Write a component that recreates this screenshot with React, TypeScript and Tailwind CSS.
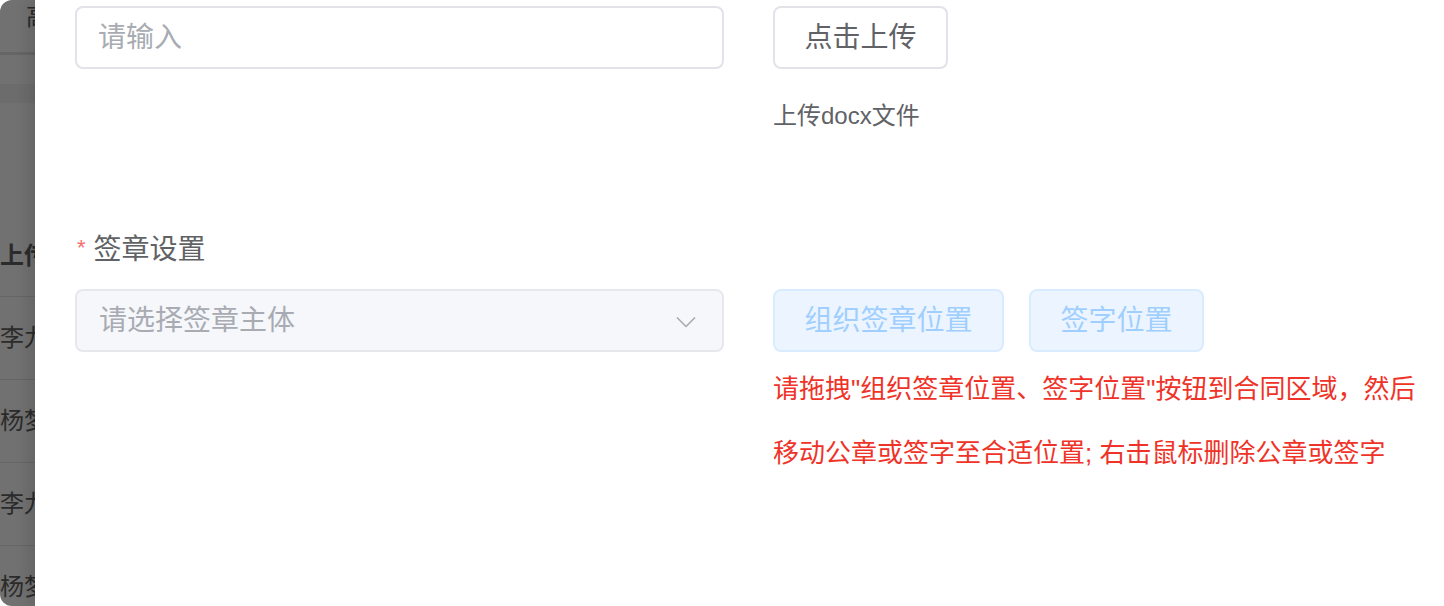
const font = { fontFamily: '"Liberation Sans", "Noto Sans CJK SC", sans-serif' };

function BackdropStrip() {
    const rows = ['李九', '杨梦', '李九', '杨梦'];

    return (
        <div className="w-[35px] shrink-0 overflow-hidden bg-[#717171] text-[#2b2b2b] flex flex-col">
            <div className="h-[52px] shrink-0 pl-[26px] pt-[4px] text-[24px] leading-[26px] whitespace-nowrap">高级</div>
            <div className="h-[3px] shrink-0 bg-[#656565]" />
            <div className="h-[29px] shrink-0" />
            <div className="h-[19px] shrink-0 bg-[#6c6c6c]" />
            <div className="h-[194px] shrink-0 flex items-end pb-[26px] border-b border-[#666666] text-[24px] leading-[28px] font-bold whitespace-nowrap">
                上传
            </div>
            {rows.map((name, i) => (
                <div
                    key={i}
                    className="h-[83px] shrink-0 flex items-center border-b border-[#666666] text-[24px] whitespace-nowrap"
                >
                    {name}
                </div>
            ))}
        </div>
    );
}

export default function App() {
    return (
        <div className="w-[1444px] h-[606px] overflow-hidden rounded-[12px] bg-white flex" style={font}>
            <BackdropStrip />

            <div className="flex-1 bg-white pl-[40px] pt-[6px] shadow-[-6px_0_14px_rgba(0,0,0,0.12)]">
                <div className="flex gap-[49px]">
                    <div className="w-[649px] h-[63px] rounded-[8px] border-2 border-[#e2e3e8] flex items-center px-[21px]">
                        <span className="text-[28px] text-[#a8abb2]">请输入</span>
                    </div>
                    <div>
                        <button
                            type="button"
                            className="w-[175px] h-[63px] rounded-[8px] border-2 border-[#e2e3e8] bg-white text-[28px] text-[#606266]"
                        >
                            点击上传
                        </button>
                        <div className="mt-[31px] text-[24px] leading-[32px] text-[#606266]">上传docx文件</div>
                    </div>
                </div>

                <div className="mt-[98px] h-[40px] flex items-center pl-[2px] text-[#606266]">
                    <span className="text-[22px] text-[#f56c6c] mr-[8px] -mt-[6px]">*</span>
                    <span className="text-[28px] leading-[40px]">签章设置</span>
                </div>

                <div className="mt-[19px] flex gap-[49px]">
                    <div className="w-[649px] h-[63px] rounded-[8px] border-2 border-[#e6e8ed] bg-[#f5f7fa] flex items-center justify-between pl-[22px] pr-[26px]">
                        <span className="text-[28px] text-[#a8abb2]">请选择签章主体</span>
                        <svg width="20" height="12" viewBox="0 0 20 12" fill="none" className="mt-[2px]">
                            <path d="M1 1.5 L10 10.5 L19 1.5" stroke="#a8abb2" strokeWidth="1.6" strokeLinejoin="round" />
                        </svg>
                    </div>
                    <div>
                        <div className="flex gap-[25px]">
                            <button
                                type="button"
                                className="w-[231px] h-[63px] rounded-[8px] border-2 border-[#d9ecff] bg-[#ecf5ff] text-[28px] text-[#a0cfff]"
                            >
                                组织签章位置
                            </button>
                            <button
                                type="button"
                                className="w-[175px] h-[63px] rounded-[8px] border-2 border-[#d9ecff] bg-[#ecf5ff] text-[28px] text-[#a0cfff]"
                            >
                                签字位置
                            </button>
                        </div>
                        <div className="mt-[5px] text-[26px] leading-[64px] text-[#ef3328] whitespace-nowrap">
                            请拖拽"组织签章位置、签字位置"按钮到合同区域，然后
                            <br />
                            移动公章或签字至合适位置; 右击鼠标删除公章或签字
                        </div>
                    </div>
                </div>
            </div>
        </div>
    );
}
